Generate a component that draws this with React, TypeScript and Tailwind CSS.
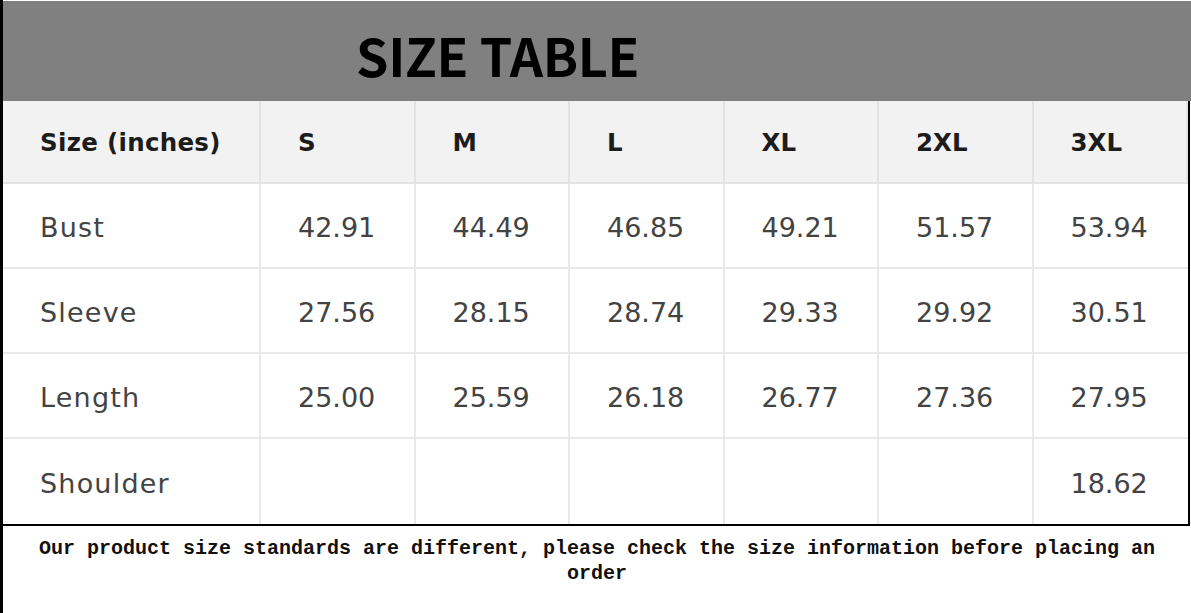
const sizes = ["S", "M", "L", "XL", "2XL", "3XL"];

const rows: { label: string; values: string[] }[] = [
  { label: "Bust", values: ["42.91", "44.49", "46.85", "49.21", "51.57", "53.94"] },
  { label: "Sleeve", values: ["27.56", "28.15", "28.74", "29.33", "29.92", "30.51"] },
  { label: "Length", values: ["25.00", "25.59", "26.18", "26.77", "27.36", "27.95"] },
  { label: "Shoulder", values: ["", "", "", "", "", "18.62"] },
];

export default function App() {
  return (
    <div className="w-[1191px] h-[613px] bg-white border-l-[3px] border-black flex flex-col overflow-hidden">
      {/* title band */}
      <div className="mt-[1px] h-[100px] bg-[#808080] flex items-center pl-[353px] pt-[8px]">
        <h1
          className="text-[52px] font-bold text-black leading-none tracking-[-0.3px]"
          style={{ fontFamily: '"Noto Sans CJK SC", "Noto Sans", sans-serif' }}
        >
          SIZE TABLE
        </h1>
      </div>

      {/* table */}
      <div
        className="mr-[1px] border-r-2 border-b-2 border-black grid grid-cols-[258px_repeat(6,1fr)] text-[#434343]"
        style={{ fontFamily: '"DejaVu Sans", Verdana, sans-serif' }}
      >
        <div className="h-[83px] bg-[#f2f2f2] border-r-2 border-b-2 border-[#e3e3e3] flex items-center pl-[37px] pt-[4px] text-[24.5px] font-bold text-[#1c1c1c] tracking-[0.3px]">
          Size (inches)
        </div>
        {sizes.map((s) => (
          <div
            key={s}
            className="h-[83px] bg-[#f2f2f2] border-r-2 border-b-2 border-[#e3e3e3] last:border-r-0 flex items-center pl-[37px] pt-[4px] text-[24.5px] font-bold text-[#1c1c1c]"
          >
            {s}
          </div>
        ))}
        {rows.map((r, i) => (
          <div key={r.label} className="contents">
            <div
              className={`h-[85px] border-r-2 border-[#e8e8e8] flex items-center pl-[37px] pt-[5px] text-[27px] tracking-[1.2px] ${
                i < rows.length - 1 ? "border-b-2" : ""
              }`}
            >
              {r.label}
            </div>
            {r.values.map((v, j) => (
              <div
                key={j}
                className={`h-[85px] border-[#e8e8e8] flex items-center pl-[37px] pt-[5px] text-[27px] ${
                  j < 5 ? "border-r-2" : ""
                } ${i < rows.length - 1 ? "border-b-2" : ""}`}
              >
                {v}
              </div>
            ))}
          </div>
        ))}
      </div>

      {/* note */}
      <p
        className="px-[16px] pt-[10px] text-center text-[20px] leading-[25px] font-bold text-[#111]"
        style={{ fontFamily: '"Liberation Mono", monospace' }}
      >
        Our product size standards are different, please check the size information before placing an order
      </p>
    </div>
  );
}
